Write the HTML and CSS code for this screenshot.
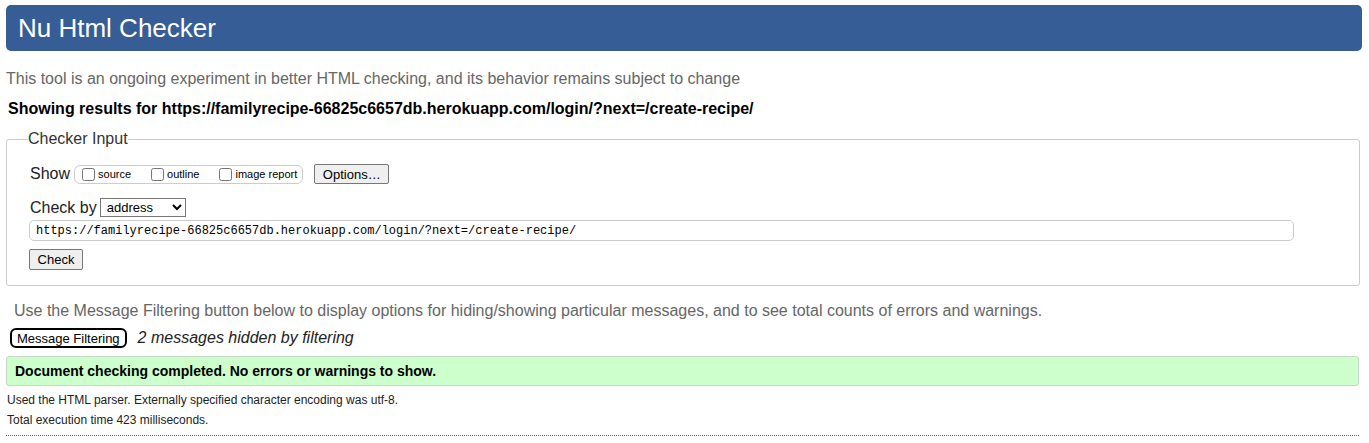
FILE: index.html
```html
<!DOCTYPE html>
<html>
<head>
<meta charset="utf-8">
<title>Nu Html Checker</title>
<link rel="stylesheet" href="styles.css">
</head>
<body>
<h1 class="title">Nu Html Checker</h1>
<p class="intro">This tool is an ongoing experiment in better HTML checking, and its behavior remains subject to change</p>
<p class="showing">Showing results for https://familyrecipe-66825c6657db.herokuapp.com/login/?next=/create-recipe/</p>
<fieldset class="checker">
  <legend class="legend">Checker Input</legend>
  <div class="row show-row">
    <span class="label">Show</span>
    <span class="group">
      <label class="opt"><input type="checkbox" class="cb"><span>source</span></label>
      <label class="opt"><input type="checkbox" class="cb"><span>outline</span></label>
      <label class="opt"><input type="checkbox" class="cb"><span>image report</span></label>
    </span>
    <button class="btn options">Options…</button>
  </div>
  <div class="row checkby-row">
    <span class="label">Check by</span>
    <select class="sel"><option>address</option></select>
  </div>
  <input class="url" type="text" value="https://familyrecipe-66825c6657db.herokuapp.com/login/?next=/create-recipe/">
  <div class="row">
    <button class="btn check">Check</button>
  </div>
</fieldset>
<p class="filter-info">Use the Message Filtering button below to display options for hiding/showing particular messages, and to see total counts of errors and warnings.</p>
<div class="filter-row">
  <button class="filter-btn">Message Filtering</button>
  <span class="hidden-msg">2 messages hidden by filtering</span>
</div>
<div class="success">Document checking completed. No errors or warnings to show.</div>
<div class="meta-block">
  <p class="meta">Used the HTML parser. Externally specified character encoding was utf-8.</p>
  <p class="meta">Total execution time 423 milliseconds.</p>
</div>
<hr class="rule">
</body>
</html>
```
FILE: styles.css
```css
html, body {
  margin: 0;
  padding: 0;
  background: #fff;
}
body {
  font-family: "Liberation Sans", Arial, sans-serif;
  color: #000;
  padding: 5px 10px 0 6px;
}
.title {
  margin: 0 -3px 0 0;
  height: 46px;
  line-height: 46px;
  background: #365d95;
  color: #fff;
  font-weight: normal;
  font-size: 26px;
  padding-left: 12px;
  border-radius: 5px;
}
.intro {
  margin: 18px 0 0 0;
  font-size: 16px;
  line-height: 20px;
  color: #666;
}
.showing {
  margin: 10px 0 0 2px;
  font-size: 16px;
  font-weight: bold;
  line-height: 20px;
}
.checker {
  margin: 11px 0 0 0;
  border: 1px solid #ccc;
  border-radius: 3px;
  padding: 16px 65px 15px 23px;
}
.legend {
  font-size: 16px;
  color: #333;
  padding: 0;
  margin-left: -2px;
}
.row {
  display: flex;
  align-items: center;
}
.label {
  font-size: 16px;
  color: #222;
  margin-right: 4px;
}
.group {
  display: inline-flex;
  align-items: center;
  border: 1px solid #ccc;
  border-radius: 6px;
  height: 17px;
  padding: 0 5px 0 6px;
}
.opt {
  display: inline-flex;
  align-items: center;
  font-size: 11px;
  margin-right: 19px;
}
.opt:last-child {
  margin-right: 0;
}
.cb {
  margin: 0 3px 0 1px;
  width: 13px;
  height: 13px;
}
.btn {
  font-family: "Liberation Sans", Arial, sans-serif;
  font-size: 13px;
  background: #efefef;
  border: 1px solid #767676;
  border-radius: 2px;
  padding: 0 6px;
  height: 20px;
  color: #000;
}
.options {
  margin-left: 11px;
  width: 75px;
}
.checkby-row {
  margin-top: 14px;
}
.sel {
  font-family: "Liberation Sans", Arial, sans-serif;
  font-size: 13px;
  height: 19px;
  width: 86px;
  border: 1px solid #767676;
  border-radius: 0;
  padding: 0 0 0 2px;
  background: #fff;
  color: #000;
  margin-left: -1px;
}
.url {
  display: block;
  box-sizing: border-box;
  width: 1265px;
  height: 21px;
  margin: 3px 0 0 -1px;
  border: 1px solid #ccc;
  border-radius: 5px;
  padding: 0 6px;
  font-family: "Liberation Mono", "Courier New", monospace;
  font-size: 12px;
  color: #000;
}
.check {
  margin-top: 8px;
  margin-left: -1px;
  width: 54px;
  height: 21px;
}
.filter-info {
  margin: 15px 0 0 8px;
  font-size: 16px;
  line-height: 20px;
  color: #666;
}
.filter-row {
  display: flex;
  align-items: center;
  margin-top: 7px;
  margin-left: 4px;
}
.filter-btn {
  font-family: "Liberation Sans", Arial, sans-serif;
  font-size: 13px;
  background: #fff;
  border: 2px solid #000;
  border-radius: 6px;
  height: 20px;
  padding: 0 5px;
  color: #000;
}
.hidden-msg {
  font-size: 16px;
  font-style: italic;
  margin-left: 11px;
  color: #222;
}
.success {
  margin-top: 8px;
  background: #ccffcc;
  border: 1px solid #c6d8c6;
  border-radius: 3px;
  height: 28px;
  line-height: 28px;
  padding-left: 8px;
  font-weight: bold;
  font-size: 14px;
}
.meta-block {
  margin-top: 4px;
}
.meta {
  margin: 0 0 0 1px;
  font-size: 12px;
  line-height: 20px;
  color: #222;
}
.rule {
  margin: 5px 0 0 0;
  border: 0;
  border-top: 1px dotted #666;
}
```
